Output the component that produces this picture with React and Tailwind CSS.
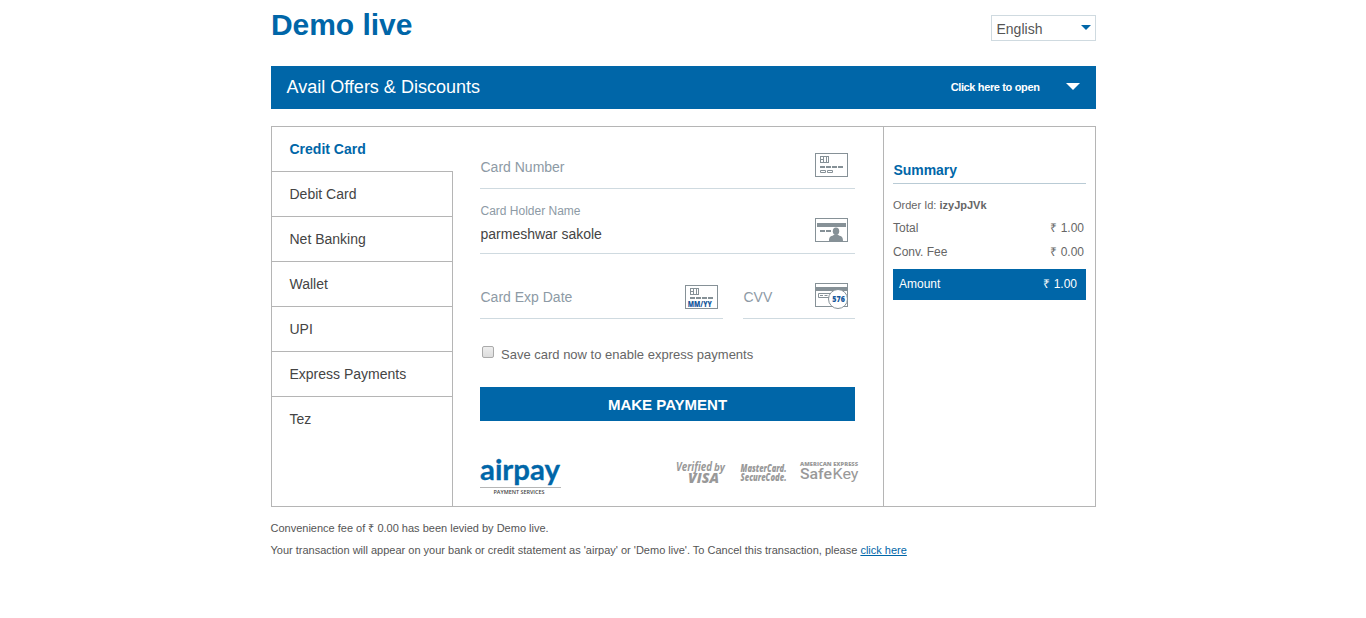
const tabs = ['Debit Card', 'Net Banking', 'Wallet', 'UPI', 'Express Payments'];

function Chip() {
  return (
    <g fill="none" stroke="#869197" strokeWidth="1">
      <rect x="5.5" y="3.5" width="8" height="6" />
      <path d="M8.5 3.5v6M11.5 3.5v6M5.5 6.5h3" />
    </g>
  );
}

function CardIcon() {
  return (
    <svg width="33" height="24" viewBox="0 0 33 24">
      <rect x=".5" y=".5" width="32" height="23" fill="#fff" stroke="#869197" />
      <Chip />
      <path d="M5 14h5M11 14h5M17 14h5M23 14h5" stroke="#869197" strokeWidth="2" />
      <path d="M5.500 17.500h5v2h-5zM12.500 17.500h5v2h-5z" fill="none" stroke="#869197" />
    </svg>
  );
}

function HolderIcon() {
  return (
    <svg width="33" height="24" viewBox="0 0 33 24">
      <rect x=".5" y=".5" width="32" height="23" fill="#fff" stroke="#869197" />
      <path d="M2 5h29v4H2zM5 12h5v2H5zM11 12h5v2h-5z" fill="#869197" />
      <ellipse cx="21" cy="13.200" rx="3.200" ry="3.700" fill="#869197" />
      <path d="M14 23c0-3.500 1-4.600 3.500-5.200l2-1.300h3l2 1.300c2.500.6 3.500 1.700 3.500 5.200z" fill="#869197" />
    </svg>
  );
}

function ExpiryIcon() {
  return (
    <svg width="33" height="24" viewBox="0 0 33 24">
      <rect x=".5" y=".5" width="32" height="23" fill="#fff" stroke="#869197" />
      <Chip />
      <path d="M5 13h5M11 13h5M17 13h5M23 13h5" stroke="#869197" strokeWidth="2" />
      <text x="2.800" y="21.500" textLength="24" lengthAdjust="spacingAndGlyphs" className="font-['Open_Sans'] text-[8px] font-extrabold" fill="#17599c">MM/YY</text>
    </svg>
  );
}

function CvvIcon() {
  return (
    <svg width="34" height="26" viewBox="0 0 34 26">
      <rect x=".5" y=".5" width="32" height="23" fill="#fff" stroke="#869197" />
      <path d="M0 4h33v4H0z" fill="#869197" />
      <path d="M3.500 10.500h14v4h-14z" fill="none" stroke="#869197" />
      <path d="M5 12.500h3M9.500 12.500h3" stroke="#869197" />
      <circle cx="23" cy="16" r="9.500" fill="#fff" stroke="#869197" />
      <text x="17.300" y="18.600" textLength="12.500" lengthAdjust="spacingAndGlyphs" className="font-['Open_Sans'] text-[8px] font-extrabold" fill="#17599c">576</text>
    </svg>
  );
}

function AirpayLogo() {
  return (
    <svg width="82" height="38" viewBox="0 0 82 38" className="overflow-visible">
      <text x="0" y="22" textLength="80" lengthAdjust="spacingAndGlyphs" className="font-[Lato] text-[28px] leading-none font-bold" fill="#0066a8" stroke="#0066a8" strokeWidth=".3">airpay</text>
      <path d="M0 29.500h81" stroke="#b5b5b5" />
      <text x="13.500" y="36" textLength="51" lengthAdjust="spacingAndGlyphs" className="font-['Open_Sans'] text-[5.5px] font-semibold" fill="#444">PAYMENT SERVICES</text>
    </svg>
  );
}

function SecurityLogos() {
  return (
    <svg width="184" height="28" viewBox="0 0 184 28" fill="#999" className="overflow-visible">
      <g className="font-['Open_Sans'] italic">
        <text x="1" y="13" textLength="36" lengthAdjust="spacingAndGlyphs" className="text-[11.5px] font-bold">Verified</text>
        <text x="39" y="13" textLength="11" lengthAdjust="spacingAndGlyphs" className="text-[10px] font-bold">by</text>
        <text x="13" y="25" textLength="31" lengthAdjust="spacingAndGlyphs" className="text-[14px] font-extrabold">VISA</text>
        <text x="65.500" y="14" textLength="46" lengthAdjust="spacingAndGlyphs" className="text-[10px] font-extrabold">MasterCard.</text>
        <text x="65.500" y="22.500" textLength="46" lengthAdjust="spacingAndGlyphs" className="text-[10px] font-extrabold">SecureCode.</text>
      </g>
      <text x="125" y="8" textLength="58" lengthAdjust="spacingAndGlyphs" className="font-['Open_Sans'] text-[4.500px] font-extrabold">AMERICAN EXPRESS</text>
      <text x="125" y="21" textLength="32" lengthAdjust="spacingAndGlyphs" className="font-[Roboto] text-[14.5px] font-medium">Safe</text>
      <text x="157.500" y="21" textLength="26" lengthAdjust="spacingAndGlyphs" className="font-[Roboto] text-[14.5px]">Key</text>
    </svg>
  );
}

function Caret({ className }) {
  return (
    <svg viewBox="0 0 14 7" preserveAspectRatio="none" className={className} fill="currentColor">
      <path d="M0 0h14L7 7z" />
    </svg>
  );
}

export default function App() {
  return (
    <div className="h-[618px] overflow-hidden bg-white pl-[271px] font-['Liberation_Sans',Arial,sans-serif] text-[#555]">
      <div className="w-[825px]">
        <header className="flex h-[66px] items-start justify-between">
          <h1 className="pt-[7px] text-[30px] leading-9 font-bold tracking-[-0.05px] text-[#0066a8]">Demo live</h1>
          <div className="mt-[15px] flex h-[26px] w-[105px] items-center justify-between border border-[#cfdae0] pr-1 pl-[4.5px] text-sm">
            <span className="pt-0.5">English</span>
            <Caret className="mb-0.5 h-[5px] w-[10px] text-[#0066a8]" />
          </div>
        </header>

        <div className="flex h-[43px] items-center bg-[#0066a8] pr-4 pl-[15.5px] text-white">
          <span className="grow pb-0.5 text-lg leading-5">Avail Offers &amp; Discounts</span>
          <span className="text-[11px] font-bold tracking-[-0.36px]">Click here to open</span>
          <Caret className="mb-0.5 ml-[26.5px] h-[7px] w-[14px]" />
        </div>

        <main className="mt-[17px] flex h-[381px] border border-[#b5b5b5]">
          <nav className="flex w-[181px] flex-col text-sm text-[#444]">
            <div className="h-[45px] border-b border-[#b5b5b5] pl-[17.5px] leading-[45px] font-bold text-[#0066a8]">Credit Card</div>
            {tabs.map((tab) => (
              <div key={tab} className="h-[45px] border-r border-b border-[#b5b5b5] pl-[17.5px] leading-[45px]">{tab}</div>
            ))}
            <div className="grow border-r border-[#b5b5b5] pl-[17.5px] leading-[45px]">Tez</div>
          </nav>

          <section className="w-[430px] pl-[27px]">
            <div className="w-[375px] text-sm text-[#8d9aa5]">
              <div className="flex h-[62px] items-start justify-between border-b border-[#cfdae0] pt-[26px] pr-[7px] pl-[0.5px]">
                <span className="pt-1 leading-5">Card Number</span>
                <CardIcon />
              </div>
              <div className="flex h-[65px] items-start justify-between border-b border-[#cfdae0] pr-[7px] pl-[0.5px]">
                <div className="pt-[13px]">
                  <div className="text-xs leading-[18px]">Card Holder Name</div>
                  <div className="pt-1 leading-5 text-[#444]">parmeshwar sakole</div>
                </div>
                <div className="pt-[29px]"><HolderIcon /></div>
              </div>
              <div className="flex h-[65px] justify-between">
                <div className="flex w-[243px] items-start justify-between border-b border-[#cfdae0] pt-[31px] pr-[5px] pl-[0.5px]">
                  <span className="pt-0.5 leading-5">Card Exp Date</span>
                  <ExpiryIcon />
                </div>
                <div className="flex w-[112px] items-start justify-between border-b border-[#cfdae0] pt-[29px] pr-1.5 pl-[0.5px]">
                  <span className="pt-1 leading-5">CVV</span>
                  <CvvIcon />
                </div>
              </div>
            </div>

            <div className="flex h-[68px] items-start pt-[27px] pl-0.5">
              <span className="h-3 w-3 rounded-[2px] border border-[#aaa] bg-linear-to-b from-[#eee] to-[#ddd]" />
              <span className="pl-[7px] text-[13px] leading-[18px] text-[#666]">Save card now to enable express payments</span>
            </div>
            <button className="block h-[34px] w-[375px] bg-[#0066a8] pt-0.5 text-[15px] font-bold text-white">MAKE PAYMENT</button>
            <div className="flex w-[379px] items-start justify-between pt-[37px]">
              <AirpayLogo />
              <SecurityLogos />
            </div>
          </section>

          <aside className="grow border-l border-[#b5b5b5] pr-[9px] pl-[9px] text-xs text-[#666]">
            <h2 className="h-[57px] border-b border-[#b9cbd5] pt-[33px] pl-[0.5px] text-sm leading-5 font-bold tracking-[-0.05px] text-[#0066a8]">Summary</h2>
            <div className="pt-[11px] text-[11px] leading-5">Order Id: <b>izyJpJVk</b></div>
            <div className="flex h-6 items-center justify-between pt-0.5 pr-0.5"><span>Total</span><span>₹ 1.00</span></div>
            <div className="flex h-6 items-center justify-between pt-0.5 pr-0.5"><span>Conv. Fee</span><span>₹ 0.00</span></div>
            <div className="mt-1.5 flex h-[31px] items-center justify-between bg-[#0066a8] pr-[9px] pb-0.5 pl-1.5 text-white"><span>Amount</span><span>₹ 1.00</span></div>
          </aside>
        </main>

        <footer className="-ml-[0.5px] pt-2.5 text-[11px] leading-[22px] text-[#555]">
          <p>Convenience fee of ₹ 0.00 has been levied by Demo live.</p>
          <p>Your transaction will appear on your bank or credit statement as 'airpay' or 'Demo live'. To Cancel this transaction, please <a className="text-[#0066a8] underline">click here</a></p>
        </footer>
      </div>
    </div>
  );
}
